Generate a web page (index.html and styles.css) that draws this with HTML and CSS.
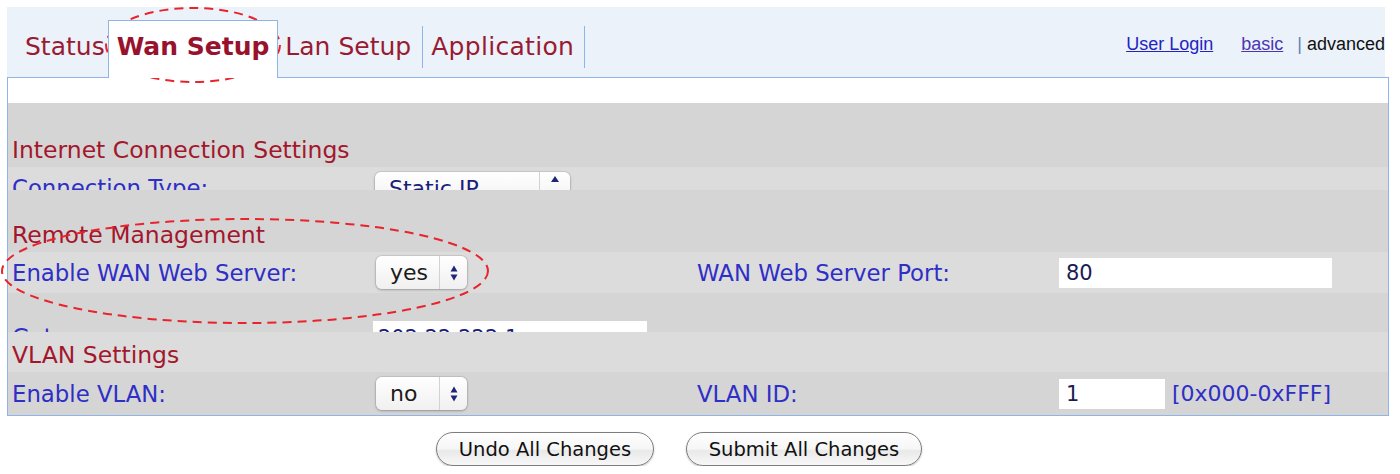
FILE: index.html
```html
<!DOCTYPE html>
<html lang="en">
<head>
  <meta charset="UTF-8">
  <title>Wan Setup</title>
  <link rel="stylesheet" href="styles.css">
</head>
<body>

<div class="header">
  <div class="tabs">
    <a class="tab first" href="#">Status</a>
    <a class="tab active" href="#">Wan Setup</a>
    <a class="tab sep" href="#">Lan Setup</a>
    <a class="tab sep" href="#">Application</a>
  </div>
  <div class="links">
    <a class="login" href="#">User Login</a>
    <a class="mode" href="#">basic</a>
    <span class="bar">|</span>
    <span class="current">advanced</span>
  </div>
</div>

<div class="panel">
  <div class="strip"></div>

  <div class="heading tall">Internet Connection Settings</div>
  <div class="row light row-type">
    <span class="label">Connection Type:</span>
    <div class="select wide">
      <span class="value">Static IP</span>
      <span class="arrows">
        <svg width="10" height="20" viewBox="0 0 10 20"><path d="M1 8 L5 2 L9 8 Z"/></svg>
      </span>
    </div>
  </div>

  <div class="heading mid">Remote Management</div>
  <div class="row light">
    <span class="label">Enable WAN Web Server:</span>
    <div class="select">
      <span class="value">yes</span>
      <span class="arrows">
        <svg width="10" height="20" viewBox="0 0 10 20"><path d="M1.5 8.5 L5 2.5 L8.5 8.5 Z"/><path d="M1.5 11.5 L5 17.5 L8.5 11.5 Z"/></svg>
      </span>
    </div>
    <span class="label">WAN Web Server Port:</span>
    <div class="field"><span class="input long">80</span></div>
  </div>
  <div class="row row-gateway">
    <span class="label">Gateway:</span>
    <span class="input gateway">202.22.222.1</span>
  </div>

  <div class="heading short light">VLAN Settings</div>
  <div class="row row-vlan">
    <span class="label">Enable VLAN:</span>
    <div class="select">
      <span class="value">no</span>
      <span class="arrows">
        <svg width="10" height="20" viewBox="0 0 10 20"><path d="M1.5 8.5 L5 2.5 L8.5 8.5 Z"/><path d="M1.5 11.5 L5 17.5 L8.5 11.5 Z"/></svg>
      </span>
    </div>
    <span class="label">VLAN ID:</span>
    <div class="field">
      <span class="input small">1</span>
      <span class="hint">[0x000-0xFFF]</span>
    </div>
  </div>
</div>

<div class="actions">
  <button class="btn undo">Undo All Changes</button>
  <button class="btn submit">Submit All Changes</button>
</div>

<!-- review marks drawn over the page -->
<svg class="marks" width="1400" height="474" viewBox="0 0 1400 474">
  <ellipse cx="193" cy="45" rx="87" ry="37"/>
  <ellipse cx="245" cy="271" rx="243" ry="52"/>
</svg>

</body>
</html>
```

FILE: styles.css
```css
body {
  margin: 7px 0 0 7px;
  font-family: "DejaVu Sans", Verdana, sans-serif;
  background: #fff;
}

a { text-decoration: none; }

/* top bar with tabs */
.header {
  display: flex;
  width: 1378px;
  height: 70px;
  background: #ebf2fa;
}

.tabs {
  display: flex;
  align-items: flex-end;
}

.tab {
  font-size: 25px;
  line-height: 42px;
  margin-bottom: 9px;
  padding: 0 8px;
  color: #9a1a32;
}

.tab.first { padding: 0 3px 0 18px; }
.tab.sep { border-right: 1px solid #8fb5e6; padding-left: 7px; padding-right: 11px; }
.tab.sep:last-child { padding-left: 8px; padding-right: 10px; letter-spacing: 0.3px; }

.tab.active {
  position: relative;
  z-index: 1;
  font-weight: bold;
  background: #fff;
  border: 1px solid #8fb5e6;
  border-bottom: none;
  padding: 5px 8px 10px;
  margin-bottom: -1px;
  color: #98122e;
}

.links {
  margin-left: auto;
  align-self: center;
  padding-top: 4px;
  display: flex;
  align-items: center;
  font-family: "Liberation Sans", Arial, sans-serif;
  font-size: 18px;
  line-height: 20px;
}

.links a { text-decoration: underline; }
.login { color: #2323c2; margin-right: 28px; }
.mode { color: #4b35b6; margin-right: 14px; }
.bar { color: #5d82b4; margin-right: 5px; }
.current { color: #111; }

/* settings panel */
.panel {
  width: 1382px;
  box-sizing: border-box;
  border: 1px solid #8fb5e6;
  background: #d5d5d5;
}

.strip {
  height: 25px;
  background: #fff;
}

.heading {
  display: flex;
  align-items: flex-end;
  padding-left: 4px;
  font-size: 23.5px;
  line-height: 34px;
  color: #a3172d;
}

.heading.tall { height: 64px; }
.heading.mid { height: 62px; }
.heading.short { height: 40px; }

.light { background: #dcdcdc; }

.row {
  display: grid;
  grid-template-columns: 364px 321px 362px auto;
  align-items: center;
  height: 41px;
  padding-left: 4px;
  overflow: hidden;
}

.row-type {
  height: 23px;
  align-items: start;
  padding-top: 5px;
  box-sizing: border-box;
}

.row-type .label { line-height: 33px; }

.row-gateway {
  height: 39px;
  align-items: start;
  padding-top: 28px;
  box-sizing: border-box;
}

.row-gateway .label { line-height: 29px; padding-top: 2px; }

.row-vlan { height: 43px; }

.label {
  font-size: 22.8px;
  color: #2f2fc6;
  white-space: nowrap;
}

/* mac style pop-up */
.select {
  display: flex;
  width: 91px;
  height: 33px;
  border-radius: 6px;
  background: linear-gradient(#ffffff, #f0f0f0);
  box-shadow: 0 0 0 1px rgba(0,0,0,0.07), 0 1px 3px rgba(0,0,0,0.25);
  font-size: 22px;
  color: #1b1b1b;
}

.select .value {
  flex: 1;
  padding-left: 14px;
  line-height: 33px;
}

.select .arrows {
  width: 27px;
  display: flex;
  align-items: center;
  justify-content: center;
  border-left: 1px solid #d2d2d2;
}

.select .arrows path { fill: #1d2677; }

.select.wide { width: 195px; margin-left: -1px; }
.select.wide .arrows { width: 30px; }
.select.wide .arrows svg { margin-top: -10px; }
.select.wide .value { color: #1d1d7a; }

.field {
  display: flex;
  align-items: center;
}

.input {
  display: block;
  height: 30px;
  padding-left: 7px;
  box-sizing: border-box;
  background: #fff;
  font-size: 21px;
  line-height: 30px;
  color: #1c1c50;
}

.input.long { width: 273px; }
.input.small { width: 106px; }

.input.gateway {
  width: 274px;
  height: 29px;
  margin-left: -3px;
  padding-left: 5px;
  padding-top: 2px;
  color: #1d1d7a;
}

.hint {
  margin-left: 7px;
  font-size: 22px;
  color: #2f2fc6;
}

/* buttons under the panel */
.actions {
  display: flex;
  gap: 32px;
  margin-top: 16px;
  padding-left: 429px;
}

.btn {
  height: 34px;
  border: 1px solid #7d7d7d;
  border-radius: 17px;
  background: linear-gradient(#ffffff 0%, #f6f6f6 50%, #e9e9e9 55%, #f7f7f7 100%);
  box-shadow: 0 1px 2px rgba(0,0,0,0.25);
  font-family: "DejaVu Sans", Verdana, sans-serif;
  font-size: 19.5px;
  color: #111;
  padding: 0;
}

.btn.undo { width: 218px; }
.btn.submit { width: 236px; }

.marks {
  position: absolute;
  top: 0;
  left: 0;
  pointer-events: none;
}

.marks ellipse {
  fill: none;
  stroke: #e8232b;
  stroke-width: 2;
  stroke-dasharray: 9 6;
}
```
